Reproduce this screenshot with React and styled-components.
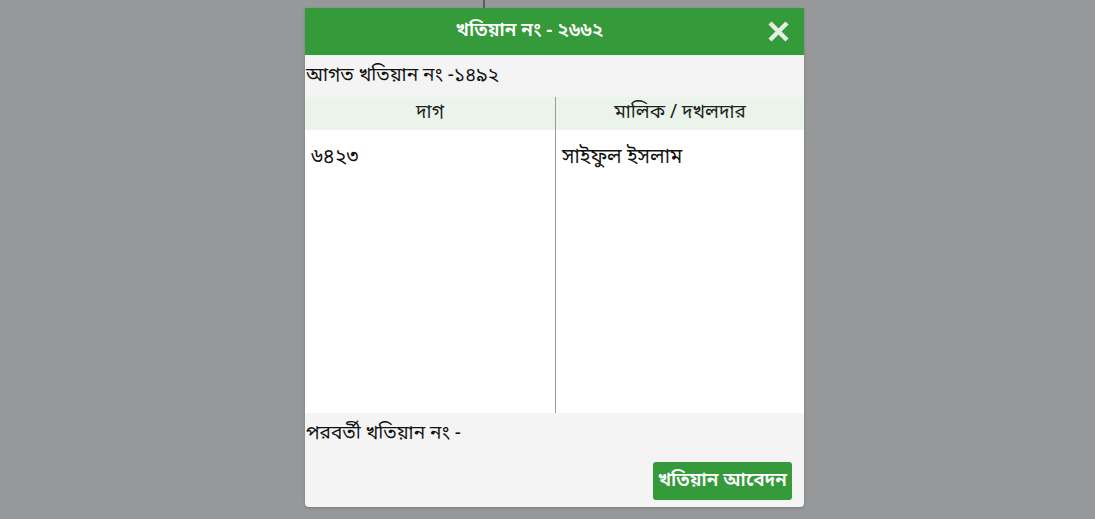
import React from 'react'
import styled, { createGlobalStyle } from 'styled-components'

const GlobalStyle = createGlobalStyle`
  html, body {
    margin: 0;
    padding: 0;
    background: #97989a;
    font-family: "Noto Sans Bengali", "Noto Sans", "DejaVu Sans", sans-serif;
  }
`

export const Overlay = styled.div`
  width: 1095px;
  height: 519px;
  background: #97989a;
  display: flex;
  justify-content: center;
  position: relative;
  overflow: hidden;
`
export const BackLine = styled.div`
  position: absolute;
  left: 483px;
  top: 0;
  width: 2px;
  height: 8px;
  background: #5a5d63;
`
export const Modal = styled.div`
  margin-top: 8px;
  margin-left: 14px;
  width: 499px;
  height: 499px;
  background: #f4f4f4;
  border-radius: 0 0 4px 4px;
  display: flex;
  flex-direction: column;
  box-shadow: 0 1px 3px rgba(0, 0, 0, 0.2);
`
export const Header = styled.div`
  height: 47px;
  background: #359a3a;
  color: #fff;
  display: flex;
  align-items: center;
  justify-content: center;
  position: relative;
  padding-right: 50px;
  font-size: 19px;
  font-weight: 600;
`
export const Close = styled.button`
  position: absolute;
  right: 13px;
  top: 11px;
  width: 25px;
  height: 25px;
  padding: 0;
  border: none;
  background: none;
  cursor: pointer;
`
export const Line = styled.div`
  color: #111;
  font-size: 19px;
  padding: 0 1px;
  height: ${({ h }) => h}px;
  display: flex;
  align-items: center;
`
export const Table = styled.div`
  display: grid;
  grid-template-columns: 250px 1fr;
  grid-template-rows: 33px 283px;
`
export const HeadCell = styled.div`
  background: #eaf4ea;
  color: #222;
  font-size: 19px;
  display: flex;
  align-items: center;
  justify-content: center;
  border-left: ${({ divider }) => (divider ? '1px solid #9a9a9a' : 'none')};
`
export const Cell = styled.div`
  background: #fff;
  color: #111;
  font-size: 20px;
  padding: 15px 6px;
  border-left: ${({ divider }) => (divider ? '1px solid #9a9a9a' : 'none')};
`
export const Footer = styled.div`
  display: flex;
  justify-content: flex-end;
  padding: 7px 12px 0 0;
`
export const Button = styled.button`
  background: #359a3a;
  color: #fff;
  border: none;
  border-radius: 3px;
  height: 38px;
  padding: 0 5px;
  font-family: inherit;
  font-size: 19px;
  font-weight: 600;
  cursor: pointer;
`

const App = () => {
  return (
    <>
      <GlobalStyle />
      <Overlay>
        <BackLine />
        <Modal>
          <Header>
            খতিয়ান নং - ২৬৬২
            <Close aria-label="close">
              <svg width="25" height="25" viewBox="0 0 25 25">
                <path d="M4 4 L21 21 M21 4 L4 21" stroke="#e4eee4" strokeWidth="4.5" strokeLinecap="butt" />
              </svg>
            </Close>
          </Header>
          <Line h={42}>আগত খতিয়ান নং -১৪৯২</Line>
          <Table>
            <HeadCell>দাগ</HeadCell>
            <HeadCell divider>মালিক / দখলদার</HeadCell>
            <Cell>৬৪২৩</Cell>
            <Cell divider>সাইফুল ইসলাম</Cell>
          </Table>
          <Line h={42}>পরবর্তী খতিয়ান নং -</Line>
          <Footer>
            <Button>খতিয়ান আবেদন</Button>
          </Footer>
        </Modal>
      </Overlay>
    </>
  )
}

export default App
